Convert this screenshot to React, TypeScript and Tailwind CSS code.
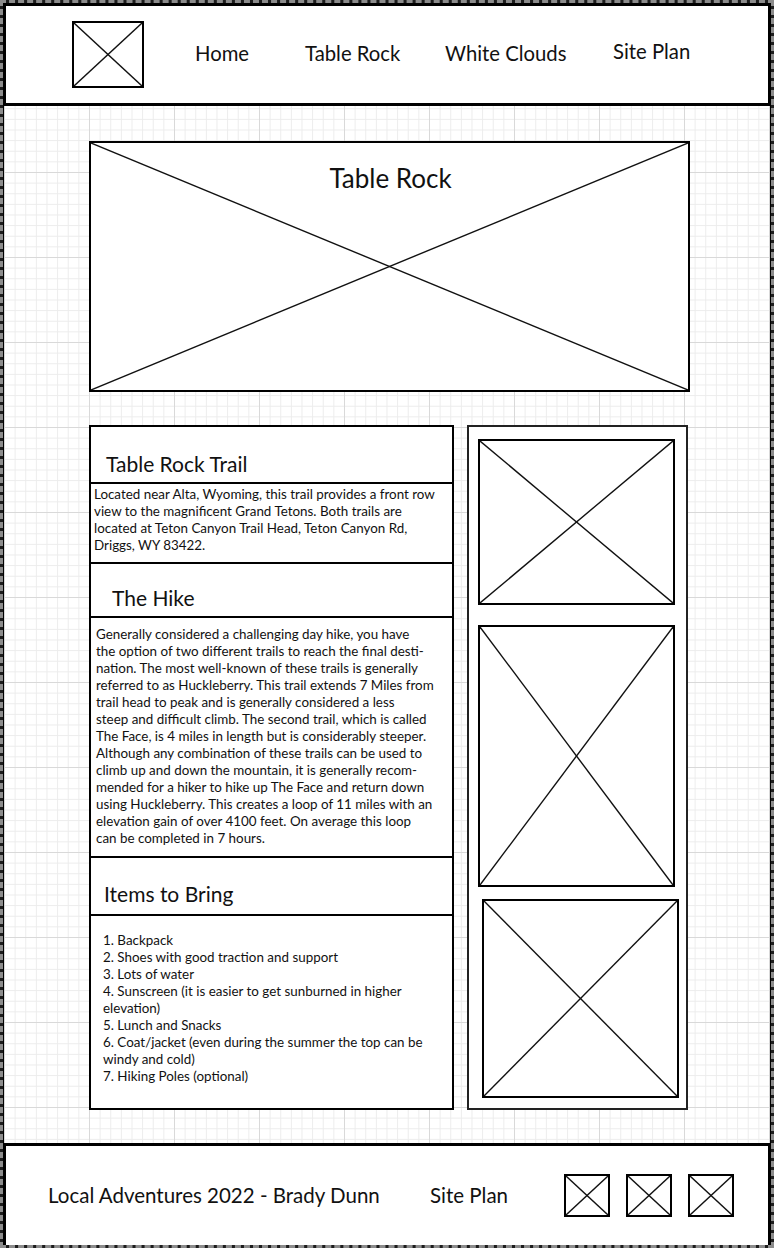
import React from "react";

const font = { fontFamily: "Lato, 'Liberation Sans', sans-serif" };

const XBox: React.FC<{ className?: string; children?: React.ReactNode }> = ({ className, children }) => (
  <div className={"relative bg-white " + (className ?? "")}>
    <svg className="absolute inset-0 w-full h-full" viewBox="0 0 100 100" preserveAspectRatio="none">
      <line x1="0" y1="0" x2="100" y2="100" stroke="#111" strokeWidth="1.4" vectorEffect="non-scaling-stroke" />
      <line x1="100" y1="0" x2="0" y2="100" stroke="#111" strokeWidth="1.4" vectorEffect="non-scaling-stroke" />
    </svg>
    {children}
  </div>
);

const hike = [
  "Generally considered a challenging day hike, you have",
  "the option of two different trails to reach the final desti-",
  "nation. The most well-known of these trails is generally",
  "referred to as Huckleberry. This trail extends 7 Miles from",
  "trail head to peak and is generally considered a less",
  "steep and difficult climb. The second trail, which is called",
  "The Face, is 4 miles in length but is considerably steeper.",
  "Although any combination of these trails can be used to",
  "climb up and down the mountain, it is generally recom-",
  "mended for a hiker to hike up The Face and return down",
  "using Huckleberry. This creates a loop of 11 miles with an",
  "elevation gain of over 4100 feet. On average this loop",
  "can be completed in 7 hours.",
];

const items = [
  "1. Backpack",
  "2. Shoes with good traction and support",
  "3. Lots of water",
  "4. Sunscreen (it is easier to get sunburned in higher",
  "elevation)",
  "5. Lunch and Snacks",
  "6. Coat/jacket (even during the summer the top can be",
  "windy and cold)",
  "7. Hiking Poles (optional)",
];

const App: React.FC = () => {
  return (
    <div
      style={font}
      className="w-[774px] h-[1248px] border-[3px] border-dashed border-[#8c8c8c] bg-[#1c1c1c] flex flex-col text-[#111]"
    >
      {/* header */}
      <header className="h-[103px] shrink-0 bg-white border-[3px] border-black flex items-center">
        <XBox className="ml-[66px] w-[72px] h-[67px] border-2 border-black" />
        <nav className="flex items-center text-[20.3px] ml-[51px] -mt-[2px] whitespace-nowrap">
          <span className="w-[110px]">Home</span>
          <span className="w-[140px]">Table Rock</span>
          <span className="w-[168px]">White Clouds</span>
          <span className="-mt-[4px]">Site Plan</span>
        </nav>
      </header>

      {/* main */}
      <main className="flex-1 border-x border-black bg-white [background-image:linear-gradient(to_right,#d9d9d9_1px,transparent_1px),linear-gradient(to_bottom,#d9d9d9_1px,transparent_1px),linear-gradient(to_right,#ececec_1px,transparent_1px),linear-gradient(to_bottom,#ececec_1px,transparent_1px)] [background-size:85px_85px,85px_85px,10.625px_10.625px,10.625px_10.625px] [background-position:0px_66px] pl-[85px] pt-[35px]">
        <XBox className="w-[601px] h-[251px] border-2 border-black">
          <h1 className="relative text-center text-[26px] pt-[16px] pl-[2px]">Table Rock</h1>
        </XBox>

        <div className="flex mt-[33px] gap-[13px]">
          {/* left column */}
          <div className="w-[365px] border-2 border-black bg-white flex flex-col">
            <div className="h-[57px] border-b-2 border-black flex items-end pl-[15px] pb-[3px] text-[21px]">
              Table Rock Trail
            </div>
            <div className="h-[80px] border-b-2 border-black pl-[3px] pt-[2px] text-[13.4px] leading-[17px] whitespace-nowrap">
              Located near Alta, Wyoming, this trail provides a front row
              <br />
              view to the magnificent Grand Tetons. Both trails are
              <br />
              located at Teton Canyon Trail Head, Teton Canyon Rd,
              <br />
              Driggs, WY 83422.
            </div>
            <div className="h-[54px] border-b-2 border-black flex items-end pl-[21px] pb-[3px] text-[21px]">
              The Hike
            </div>
            <div className="h-[240px] border-b-2 border-black pl-[5px] pt-[8px] text-[13.4px] leading-[17px] whitespace-nowrap">
              {hike.map((l) => (
                <div key={l}>{l}</div>
              ))}
            </div>
            <div className="h-[58px] border-b-2 border-black flex items-end pl-[13px] pb-[5px] text-[21px]">
              Items to Bring
            </div>
            <div className="flex-1 h-[191px] pl-[12px] pt-[16px] text-[13.4px] leading-[17px] whitespace-nowrap">
              {items.map((l) => (
                <div key={l}>{l}</div>
              ))}
            </div>
          </div>

          {/* right column */}
          <div className="w-[221px] h-[685px] border-2 border-[#222] bg-white flex flex-col pl-[9px] pt-[12px]">
            <XBox className="w-[197px] h-[166px] border-2 border-black" />
            <XBox className="w-[197px] h-[262px] border-2 border-black mt-[20px]" />
            <XBox className="w-[197px] h-[199px] border-2 border-black mt-[12px] ml-[4px]" />
          </div>
        </div>
      </main>

      {/* footer */}
      <footer className="h-[102px] shrink-0 bg-white border-[3px] border-b-0 border-black flex items-center text-[20.5px] whitespace-nowrap">
        <span className="ml-[42px] w-[382px]">Local Adventures 2022 - Brady Dunn</span>
        <span className="w-[134px]">Site Plan</span>
        <div className="flex gap-[16px]">
          <XBox className="w-[46px] h-[43px] border-2 border-black" />
          <XBox className="w-[46px] h-[43px] border-2 border-black" />
          <XBox className="w-[46px] h-[43px] border-2 border-black" />
        </div>
      </footer>
    </div>
  );
};

export default App;
